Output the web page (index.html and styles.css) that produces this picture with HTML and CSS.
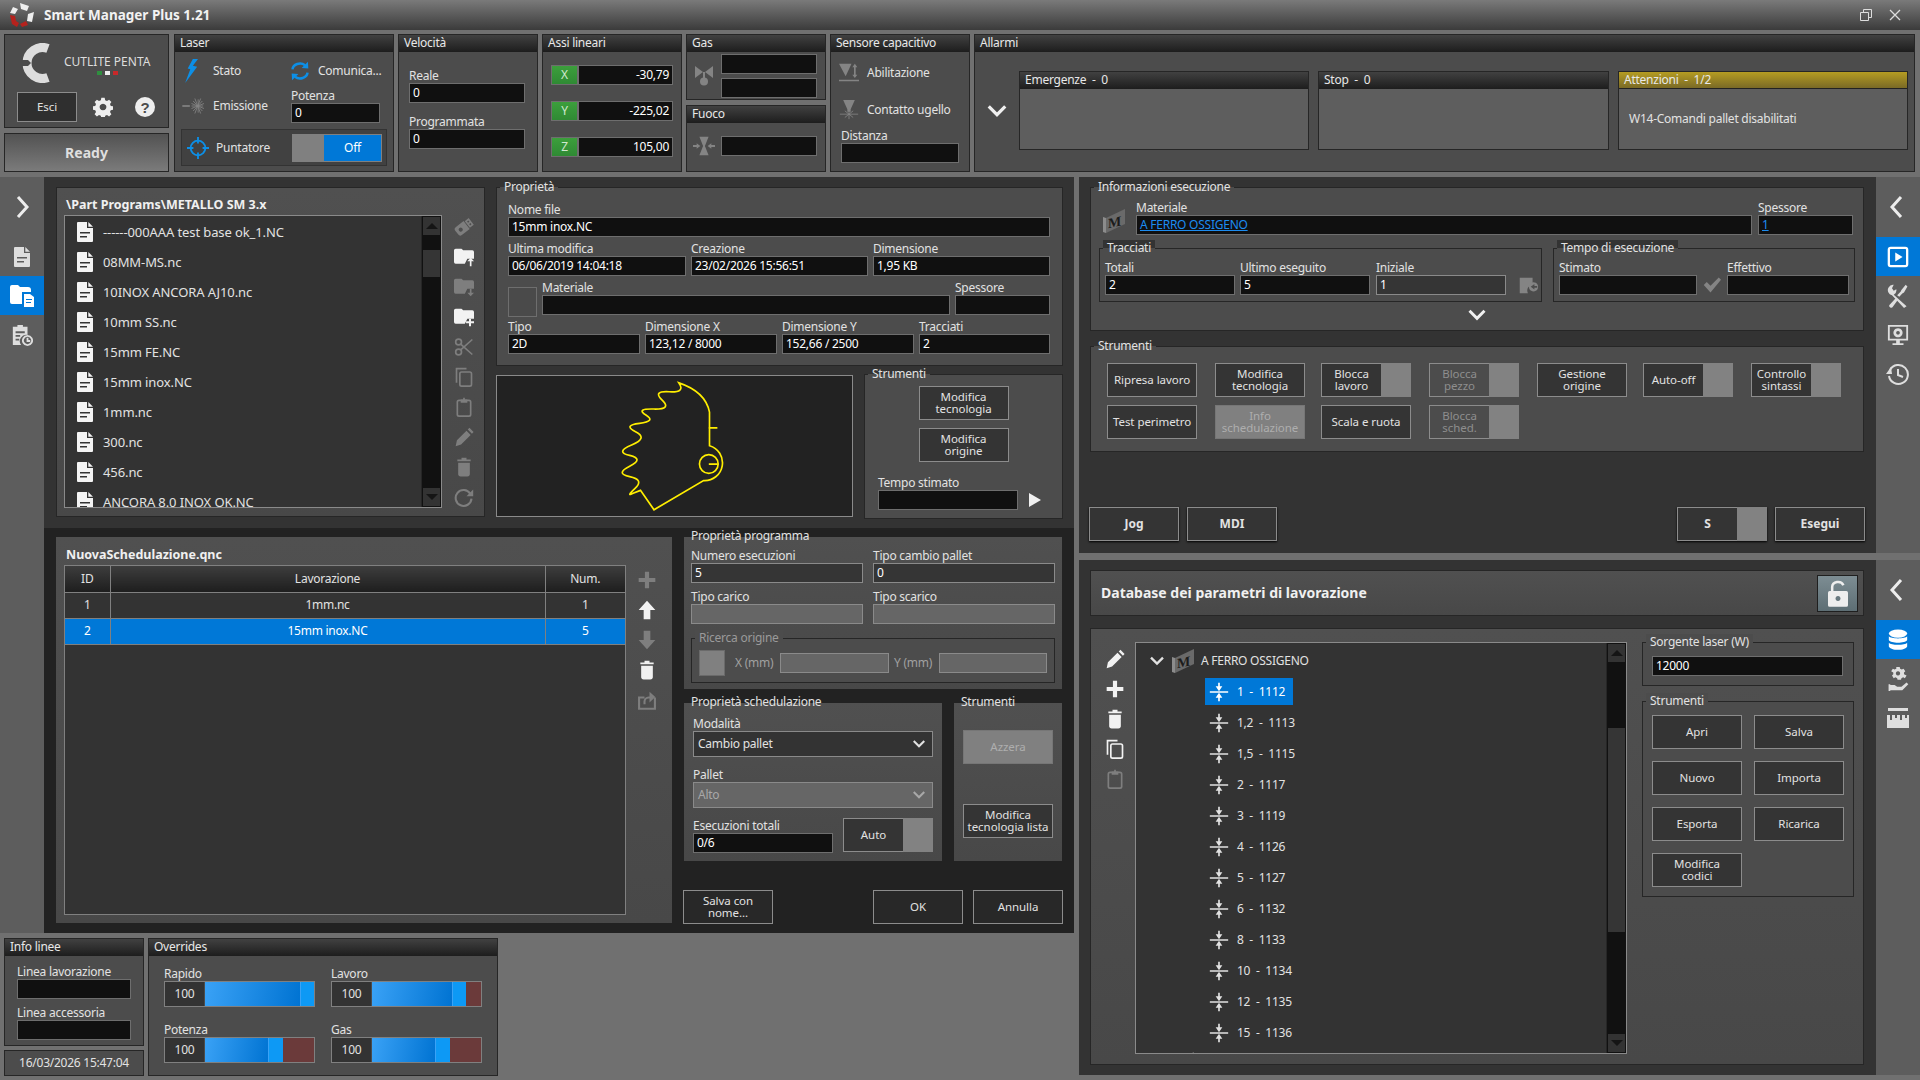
FILE: index.html
```html
<!DOCTYPE html>
<html lang="it">
<head>
    <meta charset="UTF-8">
    <title>Smart Manager Plus 1.21</title>
    <link rel="stylesheet" href="styles.css">
</head>
<body>
    <svg class="defs">
        <symbol id="i-file" viewBox="0 0 16 20"><path fill-rule="evenodd" d="M0 1a1 1 0 0 1 1-1h9v6h6v13a1 1 0 0 1-1 1H1a1 1 0 0 1-1-1zM3 10v1.6h10V10zM3 14v1.6h7V14z"/><path d="M11.3 0L16 4.7h-4.7z"/></symbol>
        <symbol id="i-folder-up" viewBox="0 0 24 24"><path d="M2 2h7l2 2h11a2 2 0 0 1 2 2v8h-8l-3 6H2a2 2 0 0 1-2-2V4a2 2 0 0 1 2-2z"/><path d="M20 13l4 4h-3v6h-2v-6h-3z"/></symbol>
        <symbol id="i-folder-down" viewBox="0 0 24 24"><path d="M2 2h7l2 2h11a2 2 0 0 1 2 2v8h-8l-3 6H2a2 2 0 0 1-2-2V4a2 2 0 0 1 2-2z"/><path d="M20 23l4-4h-3v-5h-2v5h-3z"/></symbol>
        <symbol id="i-folder-plus" viewBox="0 0 24 24"><path d="M2 2h7l2 2h11a2 2 0 0 1 2 2v8h-8l-3 6H2a2 2 0 0 1-2-2V4a2 2 0 0 1 2-2z"/><path d="M18 14h2.4v3H24v2.4h-3.6V23H18v-3.6h-3.5V17H18z"/></symbol>
        <symbol id="i-usb" viewBox="0 0 24 24"><g transform="rotate(-38 12 12)"><path fill-rule="evenodd" d="M1 9a3 3 0 0 1 3-3h12v12H4a3 3 0 0 1-3-3zM7 9.500a2.500 2.500 0 1 0 .01 0z"/><path fill-rule="evenodd" d="M17 7h6v10h-6zM19 9v2h2V9zM19 13v2h2v-2z"/></g></symbol>
        <symbol id="i-cut" viewBox="0 0 24 24"><g fill="none" stroke="currentColor" stroke-width="2"><circle cx="5.500" cy="6" r="3.500"/><circle cx="5.500" cy="18" r="3.500"/><path d="M8 8.500L22 21M8 15.500L22 3"/></g></symbol>
        <symbol id="i-copy" viewBox="0 0 24 24"><g fill="none" stroke="currentColor" stroke-width="2"><path d="M3 19V2h12"/><rect x="7" y="6" width="14" height="17" rx="2"/></g></symbol>
        <symbol id="i-clip" viewBox="0 0 24 24"><rect x="4" y="4" width="16" height="19" rx="2" fill="none" stroke="currentColor" stroke-width="2"/><path d="M8 3h3V1h2v2h3v4H8z"/></symbol>
        <symbol id="i-pencil" viewBox="0 0 24 24"><path d="M2 23l1.500-7L15 4.500l5 5L8.500 21zM16.500 3l2-2 5 5-2 2z"/></symbol>
        <symbol id="i-trash" viewBox="0 0 24 24"><path d="M9 1h6v2h5v2H4V3h5zM5 7h14v14a3 3 0 0 1-3 2.500H8A3 3 0 0 1 5 21z"/></symbol>
        <symbol id="i-reload" viewBox="0 0 24 24"><path fill="none" stroke="currentColor" stroke-width="2.500" d="M19.500 8A9.500 9.500 0 1 0 21 14"/><path d="M23 3v8h-8z"/></symbol>
        <symbol id="i-plus" viewBox="0 0 24 24"><path d="M9.500 2h5v7.500H22v5h-7.500V22h-5v-7.500H2v-5h7.500z"/></symbol>
        <symbol id="i-up" viewBox="0 0 24 24"><path d="M12 1l10 11h-6v11H8V12H2z"/></symbol>
        <symbol id="i-down" viewBox="0 0 24 24"><path d="M12 23L2 12h6V1h8v11h6z"/></symbol>
        <symbol id="i-export" viewBox="0 0 24 24"><path fill="none" stroke="currentColor" stroke-width="2.500" d="M9 9H2.500v13.500h19V9M9 17v-3a5 5 0 0 1 5-5h2"/><path d="M15 2l7 6.500-7 6.500z"/></symbol>
        <symbol id="i-down-chev" viewBox="0 0 24 24"><path fill="none" stroke="currentColor" stroke-width="3.500" d="M3 7l9 9 9-9"/></symbol>
        <symbol id="i-left" viewBox="0 0 24 24"><path fill="none" stroke="currentColor" stroke-width="3" d="M15 2L6 12l9 10"/></symbol>
        <symbol id="i-right" viewBox="0 0 24 24"><path fill="none" stroke="currentColor" stroke-width="3" d="M8 2l9 10-9 10"/></symbol>
        <symbol id="i-gear" viewBox="0 0 24 24"><path fill-rule="evenodd" d="M10 1h4l.6 3 2.200.9 2.500-1.700 2.800 2.800-1.700 2.500.9 2.200 3 .6v4l-3 .6-.9 2.200 1.700 2.500-2.800 2.800-2.500-1.700-2.200.9-.6 3h-4l-.6-3-2.200-.9-2.500 1.700-2.800-2.800 1.700-2.500-.9-2.200-3-.6v-4l3-.6.9-2.200-1.700-2.500 2.800-2.800 2.500 1.700 2.200-.9zM12 8a4 4 0 1 0 .01 0z"/></symbol>
        <symbol id="i-bolt" viewBox="0 0 16 28"><path d="M9 0L3 11l3 1-6 16 14-19-5-1 6-8z"/></symbol>
        <symbol id="i-sync" viewBox="0 0 24 24"><path fill="none" stroke="currentColor" stroke-width="3" d="M3 10a9 7.500 0 0 1 15-5M21 14a9 7.500 0 0 1-15 5"/><path d="M14 8.500l8 .5-.5-8zM10 15.500l-8-.5.5 8z"/></symbol>
        <symbol id="i-burst" viewBox="0 0 28 24"><g stroke="currentColor" fill="none"><path stroke-width="2" d="M0 12h9"/><path d="M11 12h14M19 4v16M13 6l11 12M13 18L24 6M15 3l7 18M22 3l-7 18M11 9l15 6M11 15l15-6"/></g></symbol>
        <symbol id="i-target" viewBox="0 0 24 24"><g fill="none" stroke="currentColor" stroke-width="2"><circle cx="12" cy="12" r="8"/><path d="M12 0v7M12 17v7M0 12h7M17 12h7"/></g></symbol>
        <symbol id="i-valve" viewBox="0 0 18 20"><path d="M0 0l8 6-8 6zM18 0l-8 6 8 6zM8 6h2v6H8z"/><circle cx="9" cy="15.500" r="4"/></symbol>
        <symbol id="i-focus" viewBox="0 0 24 24"><path d="M7 2h10l-4 10 4 10H7l4-10z"/><path d="M0 11h4V9l4 3-4 3v-2H0zM24 11h-4V9l-4 3 4 3v-2h4z"/></symbol>
        <symbol id="i-sense" viewBox="0 0 24 24"><path d="M0 1h15L8 16zM19 1l3 4h-2v9h2l-3 4-3-4h2V5h-2zM0 20h24v2H0z"/></symbol>
        <symbol id="i-nozzle" viewBox="0 0 24 24"><path d="M5 0h14l-5 11v3h-4v-3z"/><path stroke="currentColor" d="M1 17h22M12 12v11M7 13l10 8M17 13L7 21"/></symbol>
        <symbol id="i-check" viewBox="0 0 24 24"><path d="M1 12l4-4 5 5L21 2l3 3-14 17z"/></symbol>
        <symbol id="i-restart" viewBox="0 0 24 24"><path d="M3 4h14v8a6 6 0 0 0-5 9H3z"/><path fill-rule="evenodd" d="M18 9a5 5 0 1 0 .01 0zM19 11v2h3v2h-3v2l-4-3z"/></symbol>
        <symbol id="i-cut-th" viewBox="0 0 24 24"><path fill="none" stroke="currentColor" stroke-width="2" d="M1 12h22M12 1v7M12 16v7"/><path d="M12 11L8 5h8zM12 13l4 6H8z"/></symbol>
        <symbol id="i-lock" viewBox="0 0 24 32"><path fill="none" stroke="currentColor" stroke-width="3" d="M5 13V8a7 6 0 0 1 13.500-2"/><path fill-rule="evenodd" d="M2 13h20a2 2 0 0 1 2 2v15a2 2 0 0 1-2 2H2a2 2 0 0 1-2-2V15a2 2 0 0 1 2-2zM12 19a3 3 0 1 0 .01 0z"/></symbol>
        <symbol id="i-folder-doc" viewBox="0 0 24 24"><path d="M2 1h6l2 2h8a3 3 0 0 1 3 3v2h-9v12H2a2 2 0 0 1-2-2V3a2 2 0 0 1 2-2z"/><path fill-rule="evenodd" d="M14 10h6l4 3v10H14zM16 15v1h6v-1zM16 18v1h5v-1z"/></symbol>
        <symbol id="i-sched" viewBox="0 0 24 24"><path fill-rule="evenodd" d="M2 3h5V1h6v2h5v9a7 7 0 0 0-7 11H2zM5 8v2h10V8zM5 12v2h5v-2zM5 16v2h4v-2z"/><path fill="none" stroke="currentColor" stroke-width="2" d="M18 13a5 5 0 1 0 .01 0zM18 15v3.500h3"/></symbol>
        <symbol id="i-play-box" viewBox="0 0 24 24"><rect x="2" y="2" width="20" height="20" rx="2" fill="none" stroke="currentColor" stroke-width="2.500"/><path d="M9 7l8 5-8 5z"/></symbol>
        <symbol id="i-tools" viewBox="0 0 24 28"><path d="M1 4a6 6 0 0 1 6-3L5 5l2 3 3-2a6 6 0 0 1-3 6.500L22 26l-3 2L5 13a6 6 0 0 1-4-9z"/><path d="M21 1l2 2-4 7-2 1-3.500 4-2.500-2 4-4 1-2zM9 17l2.500 2L6 26.500a2 2 0 0 1-4-2z"/></symbol>
        <symbol id="i-monitor" viewBox="0 0 24 24"><path fill-rule="evenodd" d="M1 1h22v17H1zM3 3v13h18V3zM10 18h4v3h4v2H6v-2h4z"/><path fill-rule="evenodd" d="M12 4.500a5 5 0 1 0 .01 0zM12 7.500a2 2 0 1 1-.01 0z"/></symbol>
        <symbol id="i-history" viewBox="0 0 24 24"><path fill="none" stroke="currentColor" stroke-width="2" d="M4 8a9.500 9.500 0 1 1-1 6M12 7v6l5 2"/><path d="M0 12l6 0-1-7z"/></symbol>
        <symbol id="i-db" viewBox="0 0 24 24"><ellipse cx="12" cy="5" rx="10" ry="4.500"/><path d="M2 8c2 3 18 3 20 0v4c-2 4-18 4-20 0zM2 15c2 3 18 3 20 0v4c-2 5-18 5-20 0z"/></symbol>
        <symbol id="i-gear-hand" viewBox="0 0 24 28"><path fill-rule="evenodd" d="M10 0h4l.5 2 2 1 2-1 2 3-1.500 1.500v2L22 10l-2 3-2-1-2 1-.5 2h-4l-.5-2-2-1-2 1-2-3 1.500-1.500v-2L4 5l2-3 2 1 2-1zM12 5a2.500 2.500 0 1 0 .01 0z"/><path d="M3 21h5l3 2h5l6-5 2 2-7 7H3zM1 20h2v8H1z"/></symbol>
        <symbol id="i-ruler" viewBox="0 0 24 24"><path d="M2 2h20v3H2zM1 9h22v13H1z"/><path fill="#5d5d5d" d="M4 9h2v5H4zM9 9h2v3H9zM14 9h2v5h-2zM19 9h2v3h-2z"/></symbol>
        <symbol id="i-metal" viewBox="0 0 24 24"><path d="M4 9L23 0v15L4 24z" fill="currentColor"/><path d="M4 9L1 8v15l3 1z" fill="#8c8c8c"/><text x="6" y="17" font-family="Liberation Serif, serif" font-weight="700" font-size="14" fill="#1c1c1c" transform="skewY(-12) translate(0 3.500)">M</text></symbol>
    </svg>

    <header class="titlebar">
        <svg class="app-logo" viewBox="0 0 24 24">
            <path fill="#eeeeee" d="M10 0l9 3-2 5-6-2zM24 9l-2 10-5-1 1-7zM3 4l5 2-3 5-5-1z"/>
            <path fill="#b5221d" d="M0 12l5 1 1 5 3 2-2 4-5-3zM10 21l6-3 2 4-6 2z"/>
        </svg>
        <span class="app-title">Smart Manager Plus 1.21</span>
        <span class="win-btns">
            <svg class="win-ico" viewBox="0 0 12 12"><path fill="none" stroke="#dddddd" d="M.5 3.500h8v8h-8zM3.500 3V.5h8v8H9"/></svg>
            <svg class="win-ico" viewBox="0 0 12 12"><path fill="none" stroke="#dddddd" stroke-width="1.300" d="M1 1l10 10M11 1L1 11"/></svg>
        </span>
    </header>

    <section class="toprow">
        <div class="logo-col">
            <div class="panel logo-panel">
                <div class="logo-row">
                    <svg class="cutlite-c" viewBox="0 0 32 40">
                        <path fill="none" stroke="#dddddd" stroke-width="9" d="M28 5.500A15.500 15.500 0 1 0 28 34.500"/>
                        <path fill="#4c4c4c" d="M0 17h8l3 3-3 3H0z"/>
                    </svg>
                    <div class="cutlite-txt">
                        <div>CUTLITE PENTA</div>
                        <div class="tricolor"><i class="t-g"></i><i class="t-w"></i><i class="t-r"></i></div>
                    </div>
                </div>
                <div class="logo-actions">
                    <button class="btn esci">Esci</button>
                    <svg class="ico ico-gear"><use href="#i-gear"/></svg>
                    <svg class="help" viewBox="0 0 20 20"><circle cx="10" cy="10" r="10" fill="#eeeeee"/><text x="10" y="15.500" text-anchor="middle" font-family="Liberation Sans, sans-serif" font-weight="700" font-size="15" fill="#4c4c4c">?</text></svg>
                </div>
            </div>
            <div class="ready">Ready</div>
        </div>

        <div class="panel w-laser">
            <div class="panel-head">Laser</div>
            <div class="laser-body">
                <div class="laser-grid">
                    <div class="state laser-state"><span class="state-ico"><svg class="ico blue bolt"><use href="#i-bolt"/></svg></span>Stato</div>
                    <div class="state state-com"><span class="state-ico narrow"><svg class="ico blue"><use href="#i-sync"/></svg></span>Comunica...</div>
                    <div class="state laser-state"><span class="state-ico"><svg class="ico muted burst"><use href="#i-burst"/></svg></span>Emissione</div>
                    <div class="field w-89"><label>Potenza</label><div class="inp">0</div></div>
                </div>
                <div class="pointer-box">
                    <svg class="ico blue ico-22"><use href="#i-target"/></svg>
                    <span>Puntatore</span>
                    <div class="switch"><i></i><span>Off</span></div>
                </div>
            </div>
        </div>

        <div class="panel w-140">
            <div class="panel-head">Velocità</div>
            <div class="speed-body">
                <div class="field"><label>Reale</label><div class="inp">0</div></div>
                <div class="field"><label>Programmata</label><div class="inp">0</div></div>
            </div>
        </div>

        <div class="panel w-140">
            <div class="panel-head">Assi lineari</div>
            <div class="axes-body">
                <div class="axis"><b>X</b><div class="inp num">-30,79</div></div>
                <div class="axis"><b>Y</b><div class="inp num">-225,02</div></div>
                <div class="axis"><b>Z</b><div class="inp num">105,00</div></div>
            </div>
        </div>

        <div class="gas-col">
            <div class="panel gas-panel">
                <div class="panel-head">Gas</div>
                <div class="gas-body">
                    <span class="gas-ico"><svg class="ico muted valve"><use href="#i-valve"/></svg></span>
                    <div class="gas-fields"><div class="inp"></div><div class="inp"></div></div>
                </div>
            </div>
            <div class="panel gas-panel fuoco">
                <div class="panel-head">Fuoco</div>
                <div class="gas-body fuoco-body">
                    <span class="gas-ico"><svg class="ico muted ico-22"><use href="#i-focus"/></svg></span>
                    <div class="gas-fields"><div class="inp"></div></div>
                </div>
            </div>
        </div>

        <div class="panel w-140">
            <div class="panel-head">Sensore capacitivo</div>
            <div class="sensor-body">
                <div class="state sensor-row"><svg class="ico muted"><use href="#i-sense"/></svg>Abilitazione</div>
                <div class="state sensor-row second"><svg class="ico muted"><use href="#i-nozzle"/></svg>Contatto ugello</div>
                <div class="field dist"><label>Distanza</label><div class="inp"></div></div>
            </div>
        </div>

        <div class="panel w-alarm">
            <div class="panel-head">Allarmi</div>
            <div class="alarm-body">
                <span class="alarm-chev"><svg class="ico ico-22 white"><use href="#i-down-chev"/></svg></span>
                <div class="alarm"><div class="panel-head">Emergenze&nbsp; -&nbsp; 0</div></div>
                <div class="alarm"><div class="panel-head">Stop&nbsp; -&nbsp; 0</div></div>
                <div class="alarm"><div class="panel-head gold">Attenzioni&nbsp; -&nbsp; 1/2</div><p>W14-Comandi pallet disabilitati</p></div>
            </div>
        </div>
    </section>

    <main class="workspace">
        <div class="left-col">
            <div class="left-work">
                <nav class="rail">
                    <div class="rail-top"><svg class="ico rail-chev"><use href="#i-right"/></svg></div>
                    <div class="rail-item"><svg class="ico"><use href="#i-file"/></svg></div>
                    <div class="rail-item on"><svg class="ico ico-24"><use href="#i-folder-doc"/></svg></div>
                    <div class="rail-item"><svg class="ico ico-22"><use href="#i-sched"/></svg></div>
                </nav>
                <div class="left-stack">
                    <section class="sec-top">
                        <div class="light file-panel">
                            <div class="strong-title">\Part Programs\METALLO SM 3.x</div>
                            <div class="file-row">
                                <div class="list-box">
                                    <ul class="file-list">
                                        <li><svg class="ico file"><use href="#i-file"/></svg>------000AAA test base ok_1.NC</li>
                                        <li><svg class="ico file"><use href="#i-file"/></svg>08MM-MS.nc</li>
                                        <li><svg class="ico file"><use href="#i-file"/></svg>10INOX ANCORA AJ10.nc</li>
                                        <li><svg class="ico file"><use href="#i-file"/></svg>10mm SS.nc</li>
                                        <li><svg class="ico file"><use href="#i-file"/></svg>15mm FE.NC</li>
                                        <li><svg class="ico file"><use href="#i-file"/></svg>15mm inox.NC</li>
                                        <li><svg class="ico file"><use href="#i-file"/></svg>1mm.nc</li>
                                        <li><svg class="ico file"><use href="#i-file"/></svg>300.nc</li>
                                        <li><svg class="ico file"><use href="#i-file"/></svg>456.nc</li>
                                        <li><svg class="ico file"><use href="#i-file"/></svg>ANCORA 8.0 INOX OK.NC</li>
                                    </ul>
                                    <div class="scroll">
                                        <div class="scroll-btn"><i class="tri-up"></i></div>
                                        <div class="thumb file-thumb"></div>
                                        <div class="scroll-btn end"><i class="tri-down"></i></div>
                                    </div>
                                </div>
                                <div class="tools file-tools">
                                    <span class="tool off"><svg class="ico"><use href="#i-usb"/></svg></span>
                                    <span class="tool"><svg class="ico"><use href="#i-folder-up"/></svg></span>
                                    <span class="tool off"><svg class="ico"><use href="#i-folder-down"/></svg></span>
                                    <span class="tool"><svg class="ico"><use href="#i-folder-plus"/></svg></span>
                                    <span class="tool off"><svg class="ico"><use href="#i-cut"/></svg></span>
                                    <span class="tool off"><svg class="ico"><use href="#i-copy"/></svg></span>
                                    <span class="tool off"><svg class="ico"><use href="#i-clip"/></svg></span>
                                    <span class="tool off"><svg class="ico"><use href="#i-pencil"/></svg></span>
                                    <span class="tool off"><svg class="ico"><use href="#i-trash"/></svg></span>
                                    <span class="tool off"><svg class="ico"><use href="#i-reload"/></svg></span>
                                </div>
                            </div>
                        </div>

                        <div class="props-col">
                            <div class="group g-dark props">
                                <span class="legend">Proprietà</span>
                                <div class="field"><label>Nome file</label><div class="inp">15mm inox.NC</div></div>
                                <div class="form-row cols-3">
                                    <div class="field"><label>Ultima modifica</label><div class="inp">06/06/2019 14:04:18</div></div>
                                    <div class="field"><label>Creazione</label><div class="inp">23/02/2026 15:56:51</div></div>
                                    <div class="field"><label>Dimensione</label><div class="inp">1,95 KB</div></div>
                                </div>
                                <div class="form-row cols-mat">
                                    <div class="swatch"></div>
                                    <div class="field"><label>Materiale</label><div class="inp"></div></div>
                                    <div class="field"><label>Spessore</label><div class="inp"></div></div>
                                </div>
                                <div class="form-row cols-4">
                                    <div class="field"><label>Tipo</label><div class="inp">2D</div></div>
                                    <div class="field"><label>Dimensione X</label><div class="inp">123,12 / 8000</div></div>
                                    <div class="field"><label>Dimensione Y</label><div class="inp">152,66 / 2500</div></div>
                                    <div class="field"><label>Tracciati</label><div class="inp">2</div></div>
                                </div>
                            </div>
                            <div class="props-low">
                                <svg class="preview" viewBox="496 375 357 142">
                                    <g fill="none" stroke="#ffee00" stroke-width="1.700">
                                        <path d="M679 382Q686 392 669 391Q652 390 662 399.500Q672 409 653.500 408.500Q635 408 645.500 414.500Q656 421 639 423Q622 425 635 431.500Q648 438 631 445Q614 452 629 455.500Q644 459 629 466.500Q614 474 629 477Q644 480 634.500 489Q625 498 632.500 494L640 491L653.700 510.700L704 481A18 18 0 0 0 710 445.700V411.700Q706 391 679 382Z"/>
                                        <circle cx="709.300" cy="464.300" r="9.500"/>
                                        <path d="M709.300 464.300H718.500M709.300 427.700H718"/>
                                    </g>
                                </svg>
                                <div class="group g-dark prop-tools">
                                    <span class="legend">Strumenti</span>
                                    <button class="btn">Modifica<br>tecnologia</button>
                                    <button class="btn">Modifica<br>origine</button>
                                    <div class="tempo">
                                        <div class="field"><label>Tempo stimato</label><div class="inp"></div></div>
                                        <i class="play"></i>
                                    </div>
                                </div>
                            </div>
                        </div>
                    </section>

                    <section class="sec-low">
                        <div class="light sched-panel">
                            <div class="strong-title">NuovaSchedulazione.qnc</div>
                            <div class="sched-row">
                                <div class="table-box">
                                    <table class="sched">
                                        <thead><tr><th class="c-id">ID</th><th>Lavorazione</th><th class="c-num">Num.</th></tr></thead>
                                        <tbody>
                                            <tr><td>1</td><td>1mm.nc</td><td>1</td></tr>
                                            <tr class="sel"><td>2</td><td>15mm inox.NC</td><td>5</td></tr>
                                        </tbody>
                                    </table>
                                </div>
                                <div class="tools sched-tools">
                                    <span class="tool off"><svg class="ico"><use href="#i-plus"/></svg></span>
                                    <span class="tool"><svg class="ico"><use href="#i-up"/></svg></span>
                                    <span class="tool off"><svg class="ico"><use href="#i-down"/></svg></span>
                                    <span class="tool"><svg class="ico"><use href="#i-trash"/></svg></span>
                                    <span class="tool off"><svg class="ico"><use href="#i-export"/></svg></span>
                                </div>
                            </div>
                        </div>

                        <div class="sched-side">
                            <div class="light bare prog">
                                <span class="legend plain">Proprietà programma</span>
                                <div class="form-row cols-prog first">
                                    <div class="field"><label>Numero esecuzioni</label><div class="inp soft">5</div></div>
                                    <div class="field"><label>Tipo cambio pallet</label><div class="inp soft">0</div></div>
                                </div>
                                <div class="form-row cols-prog">
                                    <div class="field"><label>Tipo carico</label><div class="inp dis"></div></div>
                                    <div class="field"><label>Tipo scarico</label><div class="inp dis"></div></div>
                                </div>
                                <div class="group origin">
                                    <span class="legend grey">Ricerca origine</span>
                                    <div class="origin-row">
                                        <div class="check-box"></div>
                                        <span class="lab-x">X (mm)</span><div class="inp dis in-x"></div>
                                        <span class="lab-y">Y (mm)</span><div class="inp dis in-y"></div>
                                    </div>
                                </div>
                            </div>

                            <div class="side-mid">
                                <div class="light bare sched-props">
                                    <span class="legend plain">Proprietà schedulazione</span>
                                    <div class="field"><label>Modalità</label><div class="select">Cambio pallet<svg class="ico sel-chev"><use href="#i-down-chev"/></svg></div></div>
                                    <div class="field pallet"><label>Pallet</label><div class="select dis">Alto<svg class="ico sel-chev"><use href="#i-down-chev"/></svg></div></div>
                                    <div class="exec-row">
                                        <div class="field exec"><label>Esecuzioni totali</label><div class="inp">0/6</div></div>
                                        <button class="btn toggle"><span>Auto</span><i></i></button>
                                    </div>
                                </div>
                                <div class="light bare side-tools">
                                    <span class="legend plain">Strumenti</span>
                                    <button class="btn gray">Azzera</button>
                                    <button class="btn">Modifica<br>tecnologia lista</button>
                                </div>
                            </div>

                            <div class="side-actions">
                                <button class="btn dark">Salva con<br>nome...</button>
                                <button class="btn dark push">OK</button>
                                <button class="btn dark">Annulla</button>
                            </div>
                        </div>
                    </section>
                </div>
            </div>

            <div class="bottom-row">
                <div class="bottom-left">
                    <div class="panel line-panel">
                        <div class="panel-head">Info linee</div>
                        <div class="line-body">
                            <div class="field"><label>Linea lavorazione</label><div class="inp"></div></div>
                            <div class="field"><label>Linea accessoria</label><div class="inp"></div></div>
                        </div>
                    </div>
                    <div class="panel clock">16/03/2026 15:47:04</div>
                </div>
                <div class="panel over-panel">
                    <div class="panel-head">Overrides</div>
                    <div class="over-grid">
                        <div class="field"><label>Rapido</label><div class="ovr"><span class="ovr-num">100</span><i class="ovr-fill" style="width:95px"></i><i class="ovr-knob" style="width:14px"></i></div></div>
                        <div class="field"><label>Lavoro</label><div class="ovr"><span class="ovr-num">100</span><i class="ovr-fill" style="width:80px"></i><i class="ovr-knob" style="width:14px"></i><i class="ovr-rest"></i></div></div>
                        <div class="field"><label>Potenza</label><div class="ovr"><span class="ovr-num">100</span><i class="ovr-fill" style="width:63px"></i><i class="ovr-knob" style="width:15px"></i><i class="ovr-rest"></i></div></div>
                        <div class="field"><label>Gas</label><div class="ovr"><span class="ovr-num">100</span><i class="ovr-fill" style="width:63px"></i><i class="ovr-knob" style="width:15px"></i><i class="ovr-rest"></i></div></div>
                    </div>
                </div>
            </div>
        </div>

        <div class="right-col">
            <div class="right-block block-exec">
                <section class="sec-right">
                    <div class="group g-dark info">
                        <span class="legend">Informazioni esecuzione</span>
                        <div class="info-top">
                            <span class="metal-ico"><svg class="ico ico-24 metal"><use href="#i-metal"/></svg></span>
                            <div class="field f-mat"><label>Materiale</label><div class="inp link">A FERRO OSSIGENO</div></div>
                            <div class="field f-spes"><label>Spessore</label><div class="inp link">1</div></div>
                        </div>
                        <div class="info-mid">
                            <div class="group tracks">
                                <span class="legend">Tracciati</span>
                                <div class="field w-130"><label>Totali</label><div class="inp">2</div></div>
                                <div class="field w-130"><label>Ultimo eseguito</label><div class="inp">5</div></div>
                                <div class="field w-130 init"><label>Iniziale</label><div class="inp soft">1</div></div>
                                <svg class="ico muted restart"><use href="#i-restart"/></svg>
                            </div>
                            <div class="group times">
                                <span class="legend">Tempo di esecuzione</span>
                                <div class="field w-138"><label>Stimato</label><div class="inp"></div></div>
                                <svg class="ico muted tick"><use href="#i-check"/></svg>
                                <div class="field w-122"><label>Effettivo</label><div class="inp"></div></div>
                            </div>
                        </div>
                        <div class="info-more"><svg class="ico white"><use href="#i-down-chev"/></svg></div>
                    </div>

                    <div class="group g-dark run-tools">
                        <span class="legend">Strumenti</span>
                        <div class="run-grid">
                            <button class="btn">Ripresa lavoro</button>
                            <button class="btn">Modifica<br>tecnologia</button>
                            <button class="btn toggle"><span>Blocca<br>lavoro</span><i></i></button>
                            <button class="btn toggle off"><span>Blocca<br>pezzo</span><i></i></button>
                            <button class="btn">Gestione<br>origine</button>
                            <button class="btn toggle"><span>Auto-off</span><i></i></button>
                            <button class="btn toggle"><span>Controllo<br>sintassi</span><i></i></button>
                            <button class="btn">Test perimetro</button>
                            <button class="btn gray">Info<br>schedulazione</button>
                            <button class="btn">Scala e ruota</button>
                            <button class="btn toggle off"><span>Blocca<br>sched.</span><i></i></button>
                        </div>
                    </div>

                    <div class="run-actions">
                        <button class="btn heavy">Jog</button>
                        <button class="btn heavy">MDI</button>
                        <button class="btn heavy toggle push"><span>S</span><i></i></button>
                        <button class="btn heavy">Esegui</button>
                    </div>
                </section>
                <nav class="rail">
                    <div class="rail-top"><svg class="ico rail-chev"><use href="#i-left"/></svg></div>
                    <div class="rail-item on"><svg class="ico ico-22"><use href="#i-play-box"/></svg></div>
                    <div class="rail-item"><svg class="ico ico-24"><use href="#i-tools"/></svg></div>
                    <div class="rail-item"><svg class="ico ico-22"><use href="#i-monitor"/></svg></div>
                    <div class="rail-item"><svg class="ico ico-24"><use href="#i-history"/></svg></div>
                </nav>
            </div>

            <div class="right-block block-db">
                <section class="sec-right">
                    <div class="light boxed db-head">
                        <span class="db-title">Database dei parametri di lavorazione</span>
                        <button class="lock"><svg class="ico lock-ico"><use href="#i-lock"/></svg></button>
                    </div>
                    <div class="light boxed db-body">
                        <div class="tools db-tools">
                            <span class="tool"><svg class="ico"><use href="#i-pencil"/></svg></span>
                            <span class="tool"><svg class="ico"><use href="#i-plus"/></svg></span>
                            <span class="tool"><svg class="ico"><use href="#i-trash"/></svg></span>
                            <span class="tool"><svg class="ico"><use href="#i-copy"/></svg></span>
                            <span class="tool off"><svg class="ico"><use href="#i-clip"/></svg></span>
                        </div>
                        <div class="tree-box">
                            <div class="tree">
                                <div class="tree-root"><svg class="ico root-chev"><use href="#i-down-chev"/></svg><svg class="ico ico-24 metal"><use href="#i-metal"/></svg>A FERRO OSSIGENO</div>
                                <div class="tree-item on"><span><svg class="ico"><use href="#i-cut-th"/></svg>1&nbsp; -&nbsp; 1112</span></div>
                                <div class="tree-item"><span><svg class="ico"><use href="#i-cut-th"/></svg>1,2&nbsp; -&nbsp; 1113</span></div>
                                <div class="tree-item"><span><svg class="ico"><use href="#i-cut-th"/></svg>1,5&nbsp; -&nbsp; 1115</span></div>
                                <div class="tree-item"><span><svg class="ico"><use href="#i-cut-th"/></svg>2&nbsp; -&nbsp; 1117</span></div>
                                <div class="tree-item"><span><svg class="ico"><use href="#i-cut-th"/></svg>3&nbsp; -&nbsp; 1119</span></div>
                                <div class="tree-item"><span><svg class="ico"><use href="#i-cut-th"/></svg>4&nbsp; -&nbsp; 1126</span></div>
                                <div class="tree-item"><span><svg class="ico"><use href="#i-cut-th"/></svg>5&nbsp; -&nbsp; 1127</span></div>
                                <div class="tree-item"><span><svg class="ico"><use href="#i-cut-th"/></svg>6&nbsp; -&nbsp; 1132</span></div>
                                <div class="tree-item"><span><svg class="ico"><use href="#i-cut-th"/></svg>8&nbsp; -&nbsp; 1133</span></div>
                                <div class="tree-item"><span><svg class="ico"><use href="#i-cut-th"/></svg>10&nbsp; -&nbsp; 1134</span></div>
                                <div class="tree-item"><span><svg class="ico"><use href="#i-cut-th"/></svg>12&nbsp; -&nbsp; 1135</span></div>
                                <div class="tree-item"><span><svg class="ico"><use href="#i-cut-th"/></svg>15&nbsp; -&nbsp; 1136</span></div>
                                <div class="tree-root"><svg class="ico root-chev hidden"><use href="#i-down-chev"/></svg><svg class="ico ico-24 metal"><use href="#i-metal"/></svg></div>
                            </div>
                            <div class="scroll">
                                <div class="scroll-btn"><i class="tri-up"></i></div>
                                <div class="thumb tree-thumb"></div>
                                <div class="scroll-btn end"><i class="tri-down"></i></div>
                            </div>
                        </div>
                        <div class="db-side">
                            <div class="group source">
                                <span class="legend">Sorgente laser (W)</span>
                                <div class="inp">12000</div>
                            </div>
                            <div class="group db-tools-box">
                                <span class="legend">Strumenti</span>
                                <div class="db-grid">
                                    <button class="btn">Apri</button>
                                    <button class="btn">Salva</button>
                                    <button class="btn">Nuovo</button>
                                    <button class="btn">Importa</button>
                                    <button class="btn">Esporta</button>
                                    <button class="btn">Ricarica</button>
                                    <button class="btn">Modifica<br>codici</button>
                                </div>
                            </div>
                        </div>
                    </div>
                </section>
                <nav class="rail">
                    <div class="rail-top"><svg class="ico rail-chev"><use href="#i-left"/></svg></div>
                    <div class="rail-item on"><svg class="ico ico-22"><use href="#i-db"/></svg></div>
                    <div class="rail-item"><svg class="ico ico-24"><use href="#i-gear-hand"/></svg></div>
                    <div class="rail-item"><svg class="ico ico-24"><use href="#i-ruler"/></svg></div>
                </nav>
            </div>
        </div>
    </main>
</body>
</html>
```

FILE: styles.css
```css
* {
    box-sizing: border-box;
}

html, body {
    margin: 0;
    padding: 0;
}

body {
    width: 1920px;
    height: 1080px;
    overflow: hidden;
    background-color: #707070;
    color: #e2e2e2;
    font-family: "Noto Sans", "Open Sans", sans-serif;
    font-size: 12px;
    letter-spacing: -0.25px;
    line-height: 14px;
}

.defs {
    display: none;
}

/* generic bits */
.ico {
    display: block;
    width: 20px;
    height: 20px;
    fill: currentColor;
    flex: none;
}

.ico-22 { width: 22px; height: 22px; }
.ico-24 { width: 24px; height: 24px; }
.blue { color: #0d8fe6; }
.muted { color: #848484; }
.white { color: #f0f0f0; }

.panel {
    background-color: #4c4c4c;
    border: 1px solid #262626;
}

.panel-head {
    height: 17px;
    padding-left: 5px;
    background: linear-gradient(#414141, #1d1d1d);
    color: #e8e8e8;
    line-height: 16px;
}

.light {
    background: linear-gradient(#505050, #484848);
}

.boxed {
    border: 1px solid #262626;
}

.field {
    display: flex;
    flex-direction: column;
    min-width: 0;
}

.field label {
    height: 14px;
    line-height: 14px;
    white-space: nowrap;
}

.inp {
    height: 20px;
    padding: 0 3px;
    border: 1px solid #6e6e6e;
    background-color: #101010;
    color: #ffffff;
    line-height: 18px;
    white-space: nowrap;
}

.inp.num {
    text-align: right;
}

.inp.soft {
    background-color: #353535;
    border-color: #8a8a8a;
}

.inp.dis {
    background-color: #666666;
    border-color: #8a8a8a;
}

.inp.link {
    color: #1c8cf0;
    text-decoration: underline;
}

.btn {
    display: block;
    width: 90px;
    height: 34px;
    padding: 0;
    border: 1px solid #8c8c8c;
    background-color: #343434;
    color: #e2e2e2;
    font-family: inherit;
    font-size: 11.5px;
    letter-spacing: -0.05px;
    line-height: 12.5px;
    text-align: center;
}

.btn.dark { background-color: #282828; }
.btn.heavy { font-size: 12px; font-weight: 700; letter-spacing: 0; box-shadow: 0 1px 2px #000000; }

.btn.gray {
    background-color: #808080;
    border-color: #767676;
    color: #aeaeae;
}

.toggle {
    display: flex;
    align-items: stretch;
}

.toggle span {
    flex: 1;
    align-self: center;
}

.toggle i {
    width: 30px;
    margin: -1px -1px -1px 0;
    background-color: #828282;
}

.btn.toggle.off {
    background-color: #4c4c4c;
    color: #8e8e8e;
}

.group {
    position: relative;
    border: 1px solid #262626;
    background-color: #4c4c4c;
}

.legend {
    position: absolute;
    top: -9px;
    left: 3px;
    height: 16px;
    padding: 0 4px;
    background: linear-gradient(var(--outer, #4c4c4c) 50%, #4c4c4c 50%);
    line-height: 16px;
    white-space: nowrap;
}

.g-dark { --outer: #333333; }

.legend.plain {
    top: -9px;
    left: 3px;
    background: none;
}

.legend.grey {
    color: #9a9a9a;
}

.form-row {
    display: grid;
    column-gap: 5px;
    margin-top: 5px;
}

.tools {
    display: flex;
    flex-direction: column;
    align-items: center;
    flex: none;
}

.tool {
    display: flex;
    align-items: center;
    justify-content: center;
    height: 30px;
    color: #f2f2f2;
}

.tool.off {
    color: #7e7e7e;
}

.scroll {
    display: flex;
    flex-direction: column;
    width: 20px;
    padding: 1px;
    background-color: #111111;
    border-left: 1px solid #262626;
    flex: none;
}

.scroll-btn {
    display: flex;
    align-items: center;
    justify-content: center;
    height: 18px;
    background-color: #333333;
    flex: none;
}

.scroll-btn.end {
    margin-top: auto;
}

.tri-up, .tri-down {
    width: 0;
    height: 0;
    border-left: 6px solid transparent;
    border-right: 6px solid transparent;
}

.tri-up { border-bottom: 6px solid #151515; }
.tri-down { border-top: 6px solid #151515; }

.thumb {
    background-color: #353535;
    flex: none;
}

/* title bar */
.titlebar {
    display: flex;
    align-items: center;
    height: 30px;
    padding-left: 10px;
    background: linear-gradient(#7a7a7a, #3b3b3b);
}

.app-logo {
    width: 24px;
    height: 24px;
    margin-right: 10px;
}

.app-title {
    color: #f2f2f2;
    font-size: 13.5px;
    font-weight: 700;
    letter-spacing: 0;
}

.win-btns {
    display: flex;
    align-items: center;
    gap: 17px;
    margin-left: auto;
    margin-right: 19px;
}

.win-ico {
    display: block;
    width: 12px;
    height: 12px;
}

/* top row of machine panels */
.toprow {
    display: flex;
    gap: 4px;
    height: 138px;
    margin-top: 4px;
    padding-left: 4px;
}

.logo-col {
    display: flex;
    flex-direction: column;
    gap: 5px;
    width: 165px;
    margin-right: 1px;
}

.logo-panel {
    height: 94px;
    padding: 8px 0 0 12px;
}

.logo-row {
    display: flex;
    align-items: center;
    padding-left: 3px;
}

.cutlite-c {
    width: 32px;
    height: 40px;
    margin-right: 12px;
}

.cutlite-txt {
    margin-top: 3px;
    color: #dddddd;
    font-size: 12px;
    letter-spacing: 0;
    line-height: 14px;
    text-align: center;
}

.tricolor {
    display: flex;
    justify-content: center;
    gap: 3px;
    margin-top: 2px;
}

.tricolor i {
    width: 5px;
    height: 4px;
}

.t-g { background-color: #2f8f3f; }
.t-w { background-color: #eeeeee; }
.t-r { background-color: #c8282a; }

.logo-actions {
    display: flex;
    align-items: center;
    margin-top: 9px;
}

.esci {
    width: 60px;
    height: 30px;
    background-color: #2f2f2f;
    line-height: 26px;
}

.ico-gear {
    margin-left: 16px;
    color: #eeeeee;
}

.help {
    display: block;
    width: 20px;
    height: 20px;
    margin-left: 22px;
}

.ready {
    flex: 1;
    border: 1px solid #262626;
    background: linear-gradient(#525252, #7b7b7b);
    color: #dfdfdf;
    font-size: 14px;
    font-weight: 700;
    letter-spacing: 0;
    line-height: 37px;
    text-align: center;
}

.w-laser { width: 220px; }
.w-140 { width: 140px; }
.w-alarm { width: 941px; }
.w-89 { width: 89px; }

.laser-body {
    padding: 9px 0 0 6px;
}

.laser-grid {
    display: grid;
    grid-template-columns: 110px 89px;
    grid-template-rows: 20px 34px;
    row-gap: 8px;
}

.state {
    display: flex;
    align-items: center;
    white-space: nowrap;
}

.state-ico {
    display: flex;
    justify-content: center;
    width: 22px;
    margin-right: 10px;
    flex: none;
}

.state-ico.narrow {
    width: 18px;
    margin-right: 9px;
}

.bolt {
    width: 14px;
    height: 24px;
}

.burst {
    width: 24px;
    margin-left: 4px;
}

.valve {
    width: 18px;
}

.pointer-box {
    display: flex;
    align-items: center;
    width: 206px;
    height: 37px;
    margin-top: 6px;
    padding: 0 4px 0 5px;
    border: 1px solid #333333;
    background-color: #414141;
}

.pointer-box span {
    margin-left: 7px;
}

.switch {
    display: flex;
    width: 90px;
    height: 28px;
    margin-left: auto;
    border: 1px solid #808080;
}

.switch i {
    width: 31px;
    background-color: #808080;
}

.switch span {
    flex: 1;
    margin: 0;
    background-color: #0078d7;
    color: #ffffff;
    line-height: 26px;
    text-align: center;
}

.speed-body {
    display: flex;
    flex-direction: column;
    gap: 12px;
    padding: 17px 12px 0 10px;
}

.axes-body {
    display: flex;
    flex-direction: column;
    gap: 16px;
    padding: 13px 0 0 8px;
}

.axis {
    display: flex;
}

.axis b {
    width: 27px;
    height: 20px;
    background: linear-gradient(#3c9f3c, #2f8a34);
    border: 1px solid #6e6e6e;
    color: #cfe8cf;
    font-weight: 400;
    line-height: 18px;
    text-align: center;
}

.axis .inp {
    width: 95px;
}

.gas-col {
    display: flex;
    flex-direction: column;
    gap: 5px;
    width: 140px;
}

.gas-panel { height: 66px; }
.fuoco { height: 67px; }

.gas-body {
    display: flex;
    align-items: center;
    padding-top: 2px;
}

.fuoco-body {
    padding-top: 12px;
}

.gas-ico {
    display: flex;
    justify-content: center;
    width: 34px;
}

.gas-fields {
    display: flex;
    flex-direction: column;
    gap: 4px;
    width: 96px;
}

.sensor-body {
    padding: 11px 0 0 8px;
}

.sensor-row {
    gap: 8px;
    height: 20px;
}

.sensor-row.second {
    margin-top: 17px;
}

.dist {
    width: 118px;
    margin: 9px 0 0 2px;
}

.alarm-body {
    display: flex;
    gap: 9px;
    padding-top: 19px;
}

.alarm-chev {
    display: flex;
    align-items: center;
    justify-content: center;
    width: 35px;
    height: 79px;
    padding-left: 9px;
}

.alarm {
    width: 290px;
    height: 79px;
    border: 1px solid #262626;
    background-color: #5e5e5e;
}

.alarm:nth-child(3) { width: 291px; }

.alarm .gold {
    background: linear-gradient(#b59c22, #7a6a26);
    border-bottom: 1px solid #222222;
}

.alarm p {
    margin: 23px 0 0 10px;
}

/* main working area */
.workspace {
    display: flex;
    height: 903px;
    margin-top: 5px;
}

.left-col {
    width: 1074px;
    margin-right: 5px;
}

.left-work {
    display: flex;
    height: 756px;
}

.rail {
    width: 44px;
    background-color: #5d5d5d;
    flex: none;
}

.rail-top {
    display: flex;
    align-items: center;
    justify-content: center;
    height: 60px;
    color: #ededed;
}

.rail-chev {
    width: 24px;
    height: 24px;
}

.rail-item {
    display: flex;
    align-items: center;
    justify-content: center;
    height: 39px;
    color: #dedede;
}

.rail-item.on {
    background-color: #0078d7;
    color: #ffffff;
}

.left-stack {
    flex: 1;
    min-width: 0;
}

.sec-top {
    display: flex;
    height: 351px;
    padding: 10px 0 0 12px;
    background-color: #333333;
}

.file-panel {
    width: 429px;
    height: 330px;
    padding-left: 7px;
    border: 1px solid #262626;
}

.strong-title {
    height: 27px;
    padding: 10px 0 0 2px;
    color: #f0f0f0;
    font-size: 12.5px;
    font-weight: 700;
    letter-spacing: 0;
}

.file-row {
    display: flex;
}

.list-box {
    display: flex;
    width: 378px;
    height: 293px;
    border: 1px solid #8a8a8a;
    background-color: #333333;
    flex: none;
}

.file-list {
    flex: 1;
    margin: 0;
    padding: 1px 0 0;
    overflow: hidden;
    list-style: none;
}

.file-list li {
    display: flex;
    align-items: center;
    height: 30px;
    padding-left: 12px;
    font-size: 13px;
    letter-spacing: -0.1px;
    white-space: nowrap;
}

.file {
    width: 16px;
    height: 20px;
    margin-right: 10px;
    color: #f4f4f4;
}

.file-thumb {
    height: 27px;
    margin-top: 15px;
}

.file-tools {
    width: 44px;
    margin-top: -3px;
}

.props-col {
    margin-left: 11px;
}

.props {
    width: 567px;
    height: 179px;
    padding: 15px 12px 0 11px;
}

.cols-3 { grid-template-columns: 178px 177px 177px; }
.cols-mat { grid-template-columns: 29px 408px 95px; }
.cols-4 { grid-template-columns: 132px 132px 132px 131px; }

.swatch {
    height: 30px;
    margin: 6px 0 -2px;
    border: 1px solid #6e6e6e;
    background-color: #4a4a4a;
}

.props-low {
    display: flex;
    align-items: flex-start;
    gap: 11px;
    margin-top: 8px;
}

.preview {
    display: block;
    width: 357px;
    height: 142px;
    margin-top: 1px;
    border: 1px solid #8a8a8a;
    background-color: #222222;
}

.prop-tools {
    display: flex;
    flex-direction: column;
    align-items: center;
    gap: 8px;
    width: 199px;
    height: 145px;
    padding-top: 11px;
}

.tempo {
    display: flex;
    align-items: flex-end;
    width: 100%;
    margin-top: 6px;
    padding-left: 13px;
}

.tempo .field {
    width: 140px;
}

.play {
    width: 0;
    height: 0;
    margin: 0 0 3px 11px;
    border-left: 12px solid #f0f0f0;
    border-top: 7px solid transparent;
    border-bottom: 7px solid transparent;
}

.sec-low {
    display: flex;
    height: 405px;
    padding: 9px 0 0 12px;
    background-color: #222222;
}

.sched-panel {
    width: 616px;
    height: 386px;
    padding-left: 8px;
}

.sched-panel .strong-title {
    height: 28px;
    padding-top: 11px;
}

.sched-row {
    display: flex;
}

.table-box {
    width: 562px;
    height: 350px;
    border: 1px solid #808080;
    background-color: #333333;
}

.sched {
    width: 100%;
    border-collapse: collapse;
    table-layout: fixed;
}

.sched th, .sched td {
    height: 26px;
    padding: 0;
    border: 1px solid #808080;
    border-top: 0;
    font-weight: 400;
    text-align: center;
}

.sched th:first-child, .sched td:first-child { border-left: 0; }
.sched th:last-child, .sched td:last-child { border-right: 0; }

.sched th {
    background: linear-gradient(#3d3d3d, #1e1e1e);
}

.c-id { width: 45px; }
.c-num { width: 80px; }

.sched .sel td {
    background-color: #0078d7;
    color: #ffffff;
}

.sched-tools {
    width: 42px;
}

.sched-side {
    width: 378px;
    margin-left: 12px;
}

.bare {
    position: relative;
}

.prog {
    height: 152px;
    padding: 12px 0 0 7px;
}

.cols-prog {
    grid-template-columns: 172px 182px;
    column-gap: 10px;
    margin-top: 7px;
}

.cols-prog.first {
    margin-top: 0;
}

.origin {
    width: 364px;
    height: 45px;
    margin-top: 14px;
}

.origin-row {
    display: flex;
    align-items: center;
    padding: 11px 0 0 7px;
}

.check-box {
    width: 26px;
    height: 26px;
    border: 1px solid #6a6a6a;
    background-color: #808080;
    flex: none;
}

.lab-x, .lab-y {
    width: 45px;
    color: #a0a0a0;
}

.lab-x { margin-left: 10px; }
.lab-y { margin-left: 5px; }
.in-x { width: 109px; }
.in-y { width: 108px; }

.side-mid {
    display: flex;
    gap: 12px;
    margin-top: 14px;
}

.sched-props {
    width: 258px;
    height: 158px;
    padding: 14px 0 0 9px;
}

.select {
    display: flex;
    align-items: center;
    justify-content: space-between;
    width: 240px;
    height: 26px;
    padding: 0 6px 0 4px;
    border: 1px solid #8a8a8a;
    background-color: #333333;
}

.select.dis {
    background-color: #666666;
    color: #a8a8a8;
}

.sel-chev {
    width: 14px;
    height: 14px;
}

.pallet {
    margin-top: 11px;
}

.exec-row {
    display: flex;
    gap: 10px;
    margin-top: 10px;
}

.exec {
    width: 140px;
    margin-top: 1px;
}

.side-tools {
    display: flex;
    flex-direction: column;
    align-items: center;
    gap: 40px;
    width: 108px;
    height: 158px;
    padding-top: 27px;
}

.side-actions {
    display: flex;
    gap: 10px;
    width: 380px;
    margin: 29px 0 0 -1px;
}

.push {
    margin-left: auto;
}

.bottom-row {
    display: flex;
    gap: 4px;
    margin-top: 5px;
    padding-left: 4px;
}

.bottom-left {
    display: flex;
    flex-direction: column;
    gap: 4px;
    width: 140px;
}

.line-panel {
    height: 108px;
}

.line-body {
    display: flex;
    flex-direction: column;
    gap: 7px;
    padding: 9px 12px 0 12px;
}

.clock {
    height: 26px;
    line-height: 24px;
    text-align: center;
}

.over-panel {
    width: 350px;
    height: 138px;
}

.over-grid {
    display: grid;
    grid-template-columns: 151px 151px;
    column-gap: 16px;
    row-gap: 16px;
    padding: 11px 0 0 15px;
}

.ovr {
    display: flex;
    height: 26px;
    border: 1px solid #808080;
}

.ovr-num {
    width: 39px;
    margin-right: 1px;
    background-color: #333333;
    line-height: 24px;
    text-align: center;
}

.ovr-fill {
    background: linear-gradient(100deg, #3aa2f6, #0073d2);
}

.ovr-knob {
    background-color: #0d99f5;
    border-left: 1px solid #3aa2f6;
}

.ovr-rest {
    flex: 1;
    background-color: #6b3a3a;
}

/* right column */
.right-col {
    width: 841px;
}

.right-block {
    display: flex;
}

.block-exec {
    height: 376px;
}

.block-db {
    height: 515px;
    margin-top: 7px;
}

.sec-right {
    width: 797px;
    padding: 10px 0 0 11px;
    background-color: #333333;
}

.info {
    width: 774px;
    height: 144px;
    padding-top: 13px;
}

.info-top {
    display: flex;
    gap: 6px;
}

.metal-ico {
    display: flex;
    justify-content: center;
    align-items: center;
    width: 45px;
    margin-right: -6px;
    padding-top: 6px;
}

.metal {
    color: #6a6a6a;
}

.f-mat { width: 616px; }
.f-spes { width: 95px; }

.info-mid {
    display: flex;
    gap: 11px;
    margin: 13px 0 0 8px;
}

.tracks, .times {
    display: flex;
    height: 54px;
    padding: 12px 0 0 5px;
}

.tracks { width: 443px; gap: 5px; }
.times { width: 302px; }

.w-130 { width: 130px; }
.w-138 { width: 138px; }
.w-122 { width: 122px; }

.init { margin-left: 1px; }

.restart {
    width: 22px;
    height: 22px;
    margin: 13px 0 0 6px;
}

.tick {
    width: 18px;
    height: 18px;
    margin: 15px 6px 0 6px;
}

.info-more {
    display: flex;
    justify-content: center;
    margin-top: 3px;
}

.run-tools {
    width: 774px;
    height: 106px;
    margin-top: 15px;
    padding: 16px 0 0 16px;
}

.run-grid {
    display: grid;
    grid-template-columns: 108px 106px 108px 108px 106px 108px 90px;
    row-gap: 8px;
}

.run-actions {
    display: flex;
    gap: 8px;
    width: 776px;
    margin: 55px 0 0 -1px;
}

.db-head {
    display: flex;
    align-items: center;
    justify-content: space-between;
    width: 774px;
    height: 46px;
    padding: 0 5px 0 10px;
}

.db-title {
    color: #f0f0f0;
    font-size: 14px;
    font-weight: 700;
    letter-spacing: 0;
}

.lock {
    display: flex;
    align-items: center;
    justify-content: center;
    width: 41px;
    height: 37px;
    padding: 0;
    border: 1px solid #1f1f1f;
    background: linear-gradient(#7d8d93, #5d6e74);
    color: #eeeeee;
}

.lock-ico {
    width: 20px;
    height: 27px;
}

.db-body {
    display: flex;
    align-items: flex-start;
    width: 774px;
    height: 437px;
    margin-top: 12px;
    padding-top: 13px;
}

.db-tools {
    width: 44px;
    padding: 2px 0 0 3px;
}

.tree-box {
    display: flex;
    width: 492px;
    height: 412px;
    border: 1px solid #8a8a8a;
    background-color: #333333;
    flex: none;
}

.tree {
    flex: 1;
    overflow: hidden;
    padding-top: 2px;
}

.tree-root {
    display: flex;
    align-items: center;
    height: 31px;
    padding-left: 13px;
}

.root-chev {
    width: 16px;
    height: 16px;
    margin-right: 6px;
}

.hidden {
    visibility: hidden;
}

.tree-root .metal {
    margin-right: 6px;
}

.tree-item {
    display: flex;
    align-items: center;
    height: 31px;
    padding-left: 69px;
}

.tree-item span {
    display: flex;
    align-items: center;
    gap: 8px;
    height: 27px;
    padding: 0 8px 0 4px;
}

.tree-item.on span {
    background-color: #0078d7;
    color: #ffffff;
}

.tree-thumb {
    height: 204px;
    margin-top: 66px;
}

.db-side {
    width: 212px;
    margin-left: 15px;
}

.source {
    height: 44px;
    padding: 13px 10px 0 9px;
}

.db-tools-box {
    height: 196px;
    margin-top: 15px;
    padding: 13px 0 0 9px;
}

.db-grid {
    display: grid;
    grid-template-columns: 90px 90px;
    column-gap: 12px;
    row-gap: 12px;
}
```
